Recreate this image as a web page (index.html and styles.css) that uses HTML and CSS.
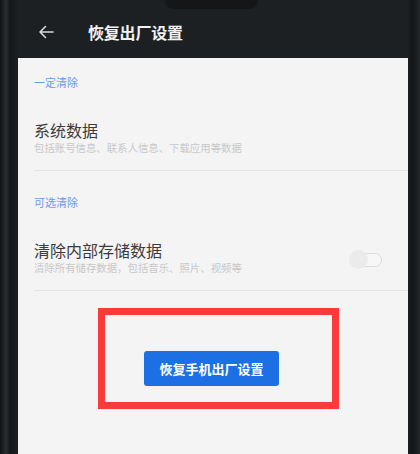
FILE: index.html
```html
<!DOCTYPE html>
<html lang="zh-CN">
<head>
<meta charset="utf-8">
<link rel="stylesheet" href="styles.css">
</head>
<body>
<div class="phone">
  <div class="notch"></div>
  <header class="topbar">
    <svg class="back" width="16" height="14" viewBox="0 0 16 14"><path d="M15 7H2M7.5 1.5L2 7l5.5 5.5" fill="none" stroke="#d8d8d8" stroke-width="1.6" stroke-linecap="round" stroke-linejoin="round"/></svg>
    <h1 class="title">恢复出厂设置</h1>
  </header>
  <main class="panel">
    <div class="section first">一定清除</div>
    <div class="row">
      <div class="row-text">
        <div class="row-title">系统数据</div>
        <div class="row-sub">包括账号信息、联系人信息、下载应用等数据</div>
      </div>
    </div>
    <div class="section">可选清除</div>
    <div class="row">
      <div class="row-text">
        <div class="row-title">清除内部存储数据</div>
        <div class="row-sub">清除所有储存数据，包括音乐、照片、视频等</div>
      </div>
      <div class="toggle"><span class="knob"></span></div>
    </div>
    <div class="highlight">
      <button class="reset">恢复手机出厂设置</button>
    </div>
  </main>
</div>
</body>
</html>
```

FILE: styles.css
```css
html, body {
  margin: 0;
  padding: 0;
}
body {
  width: 420px;
  height: 454px;
  overflow: hidden;
  background: #181b1e;
  font-family: "Noto Sans CJK SC", "Noto Sans", sans-serif;
}
.phone {
  position: relative;
  height: 454px;
  padding: 0 12px 0 18px;
  background: linear-gradient(90deg, #111315 0, #2a2e30 6px, #15181a 10px, #1c2023 18px, #1c2023 408px, #121416 412px, #23272a 420px);
  display: flex;
  flex-direction: column;
}
.notch {
  position: absolute;
  left: 165px;
  top: -8px;
  width: 93px;
  height: 17px;
  border-radius: 10px;
  background: #141618;
}
.topbar {
  height: 58px;
  display: flex;
  align-items: center;
  padding-top: 6px;
  box-sizing: border-box;
  background: #1c2023;
}
.back {
  margin-left: 20px;
  margin-right: 34px;
}
.title {
  margin: 0;
  font-size: 16px;
  font-weight: 600;
  color: #f2f2f2;
  letter-spacing: -0.2px;
}
.panel {
  flex: 1;
  background: #f5f4f5;
  display: flex;
  flex-direction: column;
}
.section {
  padding: 24px 16px 16px;
  font-size: 11px;
  line-height: 14px;
  color: #6a9aea;
}
.section.first {
  padding-top: 17px;
}
.row {
  margin-left: 16px;
  padding: 14px 26px 15px 0;
  border-bottom: 1px solid #e6e5e6;
  display: flex;
  align-items: center;
  justify-content: space-between;
}
.row-title {
  font-size: 16px;
  line-height: 22px;
  color: #3b3b3b;
}
.row-sub {
  font-size: 10.4px;
  line-height: 14px;
  color: #c8c8c8;
}
.toggle {
  position: relative;
  width: 26px;
  height: 12px;
  border: 1px solid #dcdcdc;
  border-radius: 7px;
  margin-top: 6px;
  background: #f7f7f7;
}
.knob {
  position: absolute;
  left: -6px;
  top: -4px;
  width: 19px;
  height: 19px;
  border-radius: 50%;
  background: #ebebeb;
}
.highlight {
  margin: 17px 0 0 80px;
  width: 241px;
  height: 101px;
  border: 7px solid #fb3a3a;
  padding: 36px 0 0 39px;
  box-sizing: border-box;
}
.reset {
  display: block;
  width: 135px;
  height: 35px;
  border: none;
  border-radius: 3px;
  background: #1d6fe4;
  color: #ffffff;
  font-family: "Noto Sans CJK SC", "Noto Sans", sans-serif;
  font-size: 13px;
  font-weight: 600;
  padding: 0;
}
```
